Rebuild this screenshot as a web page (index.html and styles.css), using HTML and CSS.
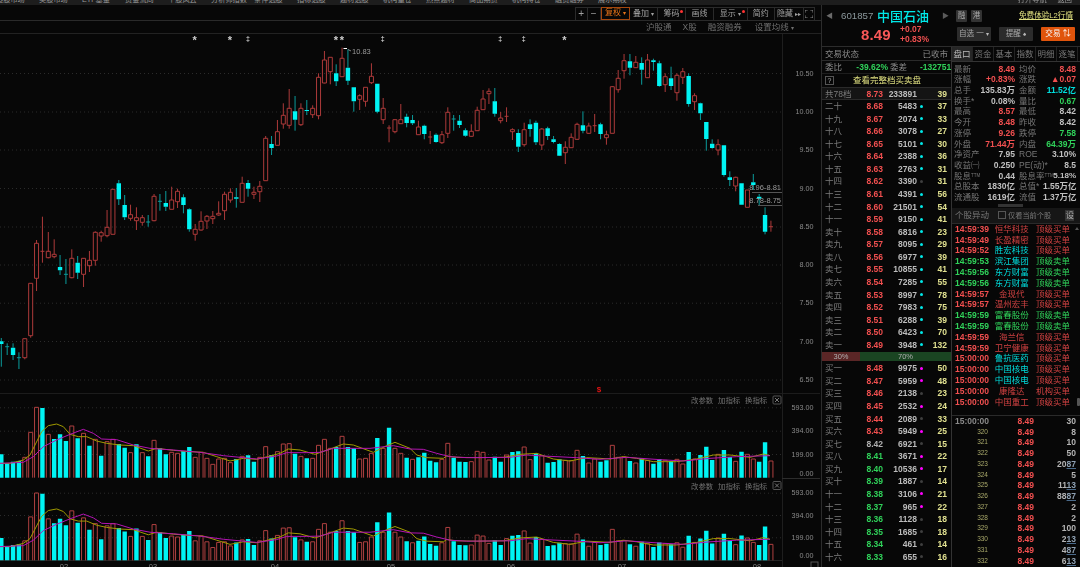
FILE: index.html
```html
<!DOCTYPE html>
<html lang="zh">
<head>
<meta charset="utf-8">
<title>中国石油 601857</title>
<link rel="stylesheet" href="styles.css">
</head>
<body>
<div class="app">
  <div class="chart-col">
    <nav class="topnav"><div class="topnav-in">
      <span>港股市场</span><span>美股市场</span><span>ETF基金</span><span>资金流向</span><span>个股风云</span><span>分析师指数</span><span>条件选股</span><span>指标选股</span><span>题材选股</span><span>机构重仓</span><span>热点题材</span><span>商品期货</span><span>机构持仓</span><span>融资融券</span><span>展示期权</span>
    </div></nav>
    <div class="toolbar">
      <button class="tb w1">+</button><button class="tb w2">−</button><button class="tb w3 on">复权 <em>▾</em></button><button class="tb w4">叠加 <em>▾</em></button><button class="tb w4">筹码<b class="rd"></b></button><button class="tb w4">画线</button><button class="tb w5">显示 <em>▾</em><b class="rd"></b></button><button class="tb w6">简约</button><button class="tb w7">隐藏 <em>▸▸</em></button><button class="tb w8">
        <svg class="full" viewBox="0 0 9 9"><path d="M0 3V0h3M6 0h3v3M9 6v3H6M3 9H0V6" /></svg></button>
    </div>
    <div class="subbar">
      <span class="s1">沪股通</span><span class="s2">X股</span><span class="s3">融资融券</span><span class="s4">设置均线 <em>▾</em></span>
    </div>
    <svg id="chart" class="chart" viewBox="0 34 820 533"></svg>
  </div>

  <aside class="side">
    <div class="strip"><span>打开导航</span><span>返回</span></div>
    <header class="head">
      <div class="head-a">
        <span class="arw">◀</span><span class="code">601857</span><span class="name">中国石油</span><span class="arw2">▶</span>
        <span class="sq">融</span><span class="sq">港</span><a class="free">免费体验L2行情</a>
      </div>
      <div class="head-b">
        <span class="bigp">8.49</span>
        <span class="chg"><span>+0.07</span><span>+0.83%</span></span>
        <button class="hb hb1">自选 一 <em>▾</em></button>
        <button class="hb hb2">提醒 <em>♠</em></button>
        <button class="hb hb3">交易 <em>⇅</em></button>
      </div>
    </header>
    <div class="panes">
      <section class="book">
        <div class="bk-status"><span>交易状态</span><span>已收市</span></div>
        <div class="bk-ratio"><span class="g1">委比</span><span class="gn">-39.62%</span><span class="g1">委差</span><span class="gn">-132751</span></div>
        <div class="bk-link"><i class="help">?</i><span>查看完整档买卖盘</span></div>
        <div class="bk bk-total"><span class="l gn">共78档</span><span class="p r">8.73</span><span class="v">233891</span><i class="dot"></i><span class="n">39</span></div>
        <div class="bk"><span class="l">二十</span><span class="p r">8.68</span><span class="v">5483</span><i class="dot c"></i><span class="n">37</span></div>
        <div class="bk"><span class="l">十九</span><span class="p r">8.67</span><span class="v">2074</span><i class="dot c"></i><span class="n">33</span></div>
        <div class="bk"><span class="l">十八</span><span class="p r">8.66</span><span class="v">3078</span><i class="dot c"></i><span class="n">27</span></div>
        <div class="bk"><span class="l">十七</span><span class="p r">8.65</span><span class="v">5101</span><i class="dot c"></i><span class="n">30</span></div>
        <div class="bk"><span class="l">十六</span><span class="p r">8.64</span><span class="v">2388</span><i class="dot c"></i><span class="n">36</span></div>
        <div class="bk"><span class="l">十五</span><span class="p r">8.63</span><span class="v">2763</span><i class="dot c"></i><span class="n">31</span></div>
        <div class="bk"><span class="l">十四</span><span class="p r">8.62</span><span class="v">3390</span><i class="dot y"></i><span class="n">31</span></div>
        <div class="bk"><span class="l">十三</span><span class="p r">8.61</span><span class="v">4391</span><i class="dot c"></i><span class="n">56</span></div>
        <div class="bk"><span class="l">十二</span><span class="p r">8.60</span><span class="v">21501</span><i class="dot c"></i><span class="n">54</span></div>
        <div class="bk"><span class="l">十一</span><span class="p r">8.59</span><span class="v">9150</span><i class="dot c"></i><span class="n">41</span></div>
        <div class="bk"><span class="l">卖十</span><span class="p r">8.58</span><span class="v">6816</span><i class="dot c"></i><span class="n">23</span></div>
        <div class="bk"><span class="l">卖九</span><span class="p r">8.57</span><span class="v">8095</span><i class="dot c"></i><span class="n">29</span></div>
        <div class="bk"><span class="l">卖八</span><span class="p r">8.56</span><span class="v">6977</span><i class="dot c"></i><span class="n">39</span></div>
        <div class="bk"><span class="l">卖七</span><span class="p r">8.55</span><span class="v">10855</span><i class="dot c"></i><span class="n">41</span></div>
        <div class="bk"><span class="l">卖六</span><span class="p r">8.54</span><span class="v">7285</span><i class="dot c"></i><span class="n">55</span></div>
        <div class="bk"><span class="l">卖五</span><span class="p r">8.53</span><span class="v">8997</span><i class="dot c"></i><span class="n">78</span></div>
        <div class="bk"><span class="l">卖四</span><span class="p r">8.52</span><span class="v">7983</span><i class="dot c"></i><span class="n">75</span></div>
        <div class="bk"><span class="l">卖三</span><span class="p r">8.51</span><span class="v">6288</span><i class="dot c"></i><span class="n">39</span></div>
        <div class="bk"><span class="l">卖二</span><span class="p r">8.50</span><span class="v">6423</span><i class="dot c"></i><span class="n">70</span></div>
        <div class="bk"><span class="l">卖一</span><span class="p r">8.49</span><span class="v">3948</span><i class="dot c"></i><span class="n">132</span></div>
        <div class="ratio-bar"><span class="rb-sell">30%</span><span class="rb-buy">70%</span></div>
        <div class="bk"><span class="l">买一</span><span class="p r">8.48</span><span class="v">9975</span><i class="dot m"></i><span class="n">50</span></div>
        <div class="bk"><span class="l">买二</span><span class="p r">8.47</span><span class="v">5959</span><i class="dot m"></i><span class="n">48</span></div>
        <div class="bk"><span class="l">买三</span><span class="p r">8.46</span><span class="v">2138</span><i class="dot y"></i><span class="n">23</span></div>
        <div class="bk"><span class="l">买四</span><span class="p r">8.45</span><span class="v">2532</span><i class="dot m"></i><span class="n">24</span></div>
        <div class="bk"><span class="l">买五</span><span class="p r">8.44</span><span class="v">2089</span><i class="dot y"></i><span class="n">33</span></div>
        <div class="bk"><span class="l">买六</span><span class="p r">8.43</span><span class="v">5949</span><i class="dot m"></i><span class="n">25</span></div>
        <div class="bk"><span class="l">买七</span><span class="p w">8.42</span><span class="v">6921</span><i class="dot y"></i><span class="n">15</span></div>
        <div class="bk"><span class="l">买八</span><span class="p gn">8.41</span><span class="v">3671</span><i class="dot m"></i><span class="n">22</span></div>
        <div class="bk"><span class="l">买九</span><span class="p gn">8.40</span><span class="v">10536</span><i class="dot m"></i><span class="n">17</span></div>
        <div class="bk"><span class="l">买十</span><span class="p gn">8.39</span><span class="v">1887</span><i class="dot y"></i><span class="n">14</span></div>
        <div class="bk"><span class="l">十一</span><span class="p gn">8.38</span><span class="v">3106</span><i class="dot m"></i><span class="n">21</span></div>
        <div class="bk"><span class="l">十二</span><span class="p gn">8.37</span><span class="v">965</span><i class="dot m"></i><span class="n">22</span></div>
        <div class="bk"><span class="l">十三</span><span class="p gn">8.36</span><span class="v">1128</span><i class="dot y"></i><span class="n">18</span></div>
        <div class="bk"><span class="l">十四</span><span class="p gn">8.35</span><span class="v">1685</span><i class="dot y"></i><span class="n">18</span></div>
        <div class="bk"><span class="l">十五</span><span class="p gn">8.34</span><span class="v">461</span><i class="dot y"></i><span class="n">14</span></div>
        <div class="bk"><span class="l">十六</span><span class="p gn">8.33</span><span class="v">655</span><i class="dot y"></i><span class="n">16</span></div>
      </section>

      <section class="info">
        <div class="tabs"><span class="on">盘口</span><span>资金</span><span>基本</span><span>指数</span><span>明细</span><span>逐笔</span></div>
        <div class="stats">
          <div class="st"><span>最新</span><b class="r">8.49</b><span>均价</span><b class="r">8.48</b></div>
          <div class="st"><span>涨幅</span><b class="r">+0.83%</b><span>涨跌</span><b class="r">▲0.07</b></div>
          <div class="st"><span>总手</span><b>135.83万</b><span>金额</span><b class="cy">11.52亿</b></div>
          <div class="st"><span>换手*</span><b>0.08%</b><span>量比</span><b class="gn">0.67</b></div>
          <div class="st"><span>最高</span><b class="r">8.57</b><span>最低</span><b>8.42</b></div>
          <div class="st"><span>今开</span><b class="r">8.48</b><span>昨收</span><b>8.42</b></div>
          <div class="st"><span>涨停</span><b class="r">9.26</b><span>跌停</span><b class="gn">7.58</b></div>
          <div class="st"><span>外盘</span><b class="r">71.44万</b><span>内盘</span><b class="gn">64.39万</b></div>
          <div class="st"><span>净资产</span><b>7.95</b><span>ROE</span><b>3.10%</b></div>
          <div class="st"><span>收益㈠</span><b>0.250</b><span>PE(动)*</span><b>8.5</b></div>
          <div class="st"><span>股息<sup>TTM</sup></span><b>0.44</b><span>股息率<sup>TTM</sup></span><b class="tight">5.18%</b></div>
          <div class="st"><span>总股本</span><b>1830亿</b><span>总值*</span><b>1.55万亿</b></div>
          <div class="st"><span>流通股</span><b>1619亿</b><span>流值</span><b>1.37万亿</b></div>
        </div>
        <div class="grip"><i></i></div>
        <div class="al-head"><span class="al-title">个股异动</span><i class="chk"></i><span class="al-only">仅看当前个股</span><span class="al-set">设</span></div>
        <div class="alerts">
          <div class="al"><span class="r">14:59:39</span><span class="dr">恒华科技</span><span class="dr">顶级买单</span></div>
          <div class="al"><span class="r">14:59:49</span><span class="dr">长盈精密</span><span class="dr">顶级买单</span></div>
          <div class="al"><span class="r">14:59:52</span><span class="cy">胜宏科技</span><span class="dr">顶级买单</span></div>
          <div class="al"><span class="gn">14:59:53</span><span class="cy">滨江集团</span><span class="gn">顶级卖单</span></div>
          <div class="al"><span class="gn">14:59:56</span><span class="cy">东方财富</span><span class="gn">顶级卖单</span></div>
          <div class="al"><span class="gn">14:59:56</span><span class="cy">东方财富</span><span class="gn">顶级卖单</span></div>
          <div class="al"><span class="r">14:59:57</span><span class="dr">金现代</span><span class="dr">顶级买单</span></div>
          <div class="al"><span class="r">14:59:57</span><span class="dr">温州宏丰</span><span class="dr">顶级买单</span></div>
          <div class="al"><span class="gn">14:59:59</span><span class="gn">富春股份</span><span class="gn">顶级卖单</span></div>
          <div class="al"><span class="gn">14:59:59</span><span class="gn">富春股份</span><span class="gn">顶级卖单</span></div>
          <div class="al"><span class="r">14:59:59</span><span class="dr">海兰信</span><span class="dr">顶级买单</span></div>
          <div class="al"><span class="r">14:59:59</span><span class="dr">卫宁健康</span><span class="dr">顶级买单</span></div>
          <div class="al"><span class="r">15:00:00</span><span class="cy">鲁抗医药</span><span class="dr">顶级买单</span></div>
          <div class="al"><span class="r">15:00:00</span><span class="cy">中国核电</span><span class="dr">顶级买单</span></div>
          <div class="al"><span class="r">15:00:00</span><span class="cy">中国核电</span><span class="dr">顶级买单</span></div>
          <div class="al"><span class="r">15:00:00</span><span class="dr">康隆达</span><span class="dr">机构买单</span></div>
          <div class="al"><span class="r">15:00:00</span><span class="dr">中国重工</span><span class="dr">顶级买单</span></div>
          <i class="sc-up"></i><i class="sc-thumb"></i>
        </div>
        <div class="trades">
          <div class="tr"><span class="t">15:00:00</span><span class="r">8.49</span><span>30</span></div>
          <div class="tr"><span class="i">320</span><span class="r">8.49</span><span>8</span></div>
          <div class="tr"><span class="i">321</span><span class="r">8.49</span><span>10</span></div>
          <div class="tr"><span class="i">322</span><span class="r">8.49</span><span>50</span></div>
          <div class="tr"><span class="i">323</span><span class="r">8.49</span><span>20<u>87</u></span></div>
          <div class="tr"><span class="i">324</span><span class="r">8.49</span><span>5</span></div>
          <div class="tr"><span class="i">325</span><span class="r">8.49</span><span>11<u>13</u></span></div>
          <div class="tr"><span class="i">326</span><span class="r">8.49</span><span>88<u>87</u></span></div>
          <div class="tr"><span class="i">327</span><span class="r">8.49</span><span>2</span></div>
          <div class="tr"><span class="i">328</span><span class="r">8.49</span><span>2</span></div>
          <div class="tr"><span class="i">329</span><span class="r">8.49</span><span>100</span></div>
          <div class="tr"><span class="i">330</span><span class="r">8.49</span><span>2<u>13</u></span></div>
          <div class="tr"><span class="i">331</span><span class="r">8.49</span><span>4<u>87</u></span></div>
          <div class="tr"><span class="i">332</span><span class="r">8.49</span><span>6<u>13</u></span></div>
        </div>
      </section>
    </div>
  </aside>
</div>
<script src="chart.js"></script>
</body>
</html>
```
FILE: styles.css
```css
* { box-sizing: border-box; margin: 0; padding: 0; }
html, body { width: 1080px; height: 567px; overflow: hidden; background: #070707; }
body { font: 8.5px/1 "Liberation Sans", "Noto Sans CJK SC", sans-serif; color: #a8a8a8; }
em, i, b { font-style: normal; font-weight: normal; }
button { font: inherit; background: none; border: 0; color: inherit; }

.app { display: flex; width: 1080px; height: 567px; overflow: hidden; filter: blur(.25px); }
.chart-col { width: 821px; flex: none; display: flex; flex-direction: column; }

.topnav { height: 5px; background: #1d1d1d; overflow: hidden; }
.topnav-in { display: flex; margin: -4px 0 0 -4px; line-height: 8px; font-size: 7.2px; color: #9a9a9a; white-space: nowrap; }
.topnav-in span { flex: 0 0 43px; }

.toolbar { display: flex; justify-content: flex-end; height: 14.5px; margin-top: 1.5px; padding-right: 6px; border-bottom: 1px solid #2a2a2a; }
.tb { height: 13.5px; border: 1px solid #2a2a2a; border-width: 1px 1px 0 0; color: #a0a0a0; font-size: 8px; display: flex; align-items: center; justify-content: center; position: relative; white-space: nowrap; }
.tb em { font-size: 6px; margin-left: 2px; }
.tb.w1 { width: 12.5px; border-left: 1px solid #2a2a2a; font-size: 10px; }
.tb.w2 { width: 13.5px; font-size: 10px; }
.tb.w3 { width: 29px; border: 1px solid #a5480f; color: #e87418; }
.tb.w4 { width: 28px; }
.tb.w5 { width: 33.5px; }
.tb.w6 { width: 27.5px; }
.tb.w7 { width: 29px; }
.tb.w8 { width: 11px; }
.rd { position: absolute; top: 2px; right: 2px; width: 3px; height: 3px; border-radius: 50%; background: #f33; }
.full { width: 8px; height: 8px; fill: none; stroke: #9a9a9a; stroke-width: 1; }

.subbar { display: flex; height: 13px; line-height: 13px; color: #6e6e6e; border-bottom: 1px solid #222; white-space: nowrap; }
.subbar em { font-size: 6px; }
.s1 { margin-left: 646px; }
.s2 { margin-left: 11px; }
.s3 { margin-left: 11px; }
.s4 { margin-left: 13px; }

.chart { display: block; width: 820px; height: 533px; }
.ax { font: 7.2px "Liberation Sans", sans-serif; fill: #8a8a8a; text-anchor: end; }
.tag { font: 7.5px "Liberation Sans", sans-serif; fill: #9a9a9a; }
.tag-end { text-anchor: end; }
.opt { font: 7.4px "Noto Sans CJK SC", sans-serif; fill: #747474; }
.mark { font: bold 11px "Liberation Sans", sans-serif; fill: #d0d0d0; text-anchor: middle; }
.mark-thin { font: bold 7px "Liberation Sans", sans-serif; fill: #d0d0d0; text-anchor: middle; }
.dollar { font: bold 8px "Liberation Sans", sans-serif; fill: #e01414; text-anchor: middle; }
.date { font: 7.5px "Liberation Sans", sans-serif; fill: #808080; text-anchor: middle; }

.side { flex: 1; display: flex; flex-direction: column; min-width: 0; }
.strip { height: 5px; background: #1d1d1d; overflow: hidden; display: flex; justify-content: flex-end; gap: 11px; padding-right: 8px; line-height: 6px; font-size: 7.2px; color: #9a9a9a; }
.strip span { margin-top: -3px; }
.head { height: 41.5px; border-left: 1px solid #2c2c2c; border-bottom: 1px solid #2c2c2c; }
.head-a { display: flex; align-items: center; height: 18px; padding-top: 3px; }
.arw { margin-left: 4px; width: 15px; color: #6a6a6a; font-size: 7px; }
.code { font-size: 9.7px; color: #8c989c; width: 36px; }
.name { font-size: 13px; width: 52px; color: #00e8e8; font-weight: 500; font-family: "Noto Sans CJK SC", sans-serif; }
.arw2 { margin-left: 13px; width: 14px; color: #5a5a5a; font-size: 7px; }
.sq { width: 11px; height: 12px; margin-right: 4px; background: #333; color: #a8a8a8; font-size: 7.5px; line-height: 12px; text-align: center; border-radius: 1px; }
.free { margin-left: 33px; font-size: 7.6px; color: #e0e080; text-decoration: underline; white-space: nowrap; }
.head-b { display: flex; align-items: center; height: 21px; padding-top: 1px; }
.bigp { margin-left: 39px; width: 39px; font-size: 15px; font-weight: bold; color: #f85858; letter-spacing: .1px; }
.chg { display: flex; flex-direction: column; gap: 1.5px; width: 57px; color: #f05050; font-weight: bold; }
.hb { width: 34px; height: 14px; background: #2c2c2c; color: #a8a8a8; white-space: nowrap; font-size: 7.6px; border-radius: 1px; }
.hb em { font-size: 6px; color: #bbb; }
.hb1 { margin-right: 8px; }
.hb2 { margin-right: 8px; }
.hb3 { background: #e0540c; color: #f4f4f4; }
.hb3 em { color: #fff; font-size: 8px; }

.panes { flex: 1; display: flex; min-height: 0; border-left: 1px solid #2c2c2c; }
.book { width: 130px; flex: none; border-right: 1px solid #333; overflow: hidden; }
.bk-status { display: flex; justify-content: space-between; height: 14px; line-height: 14px; padding: 0 3px; border-bottom: 1px solid #2a2a2a; color: #8a8a8a; }
.bk-ratio { display: grid; grid-template-columns: 30px 33px 32px 27px; height: 13px; line-height: 13px; padding-left: 3px; border-bottom: 1px solid #1d1d1d; color: #8a8a8a; white-space: nowrap; }
.bk-ratio .gn { text-align: right; font-weight: bold; }
.bk-ratio .g1:nth-child(3) { padding-left: 2px; }
.bk-link { display: flex; align-items: center; height: 13px; padding-left: 3px; color: #e0e080; }
.bk-link span { margin-left: 19px; }
.help { width: 9px; height: 9px; border: 1px solid #555; color: #a8a8a8; font-size: 7px; line-height: 7px; text-align: center; }
.bk { display: grid; grid-template-columns: 37px 21px 34px 8px 22px; height: 12.57px; line-height: 12.57px; padding-left: 3px; white-space: nowrap; }
.bk-total { height: 13.6px; line-height: 13px; background: #141414; border-bottom: 1px solid #2a2a2a; border-top: 1px solid #2a2a2a; }
.bk .l { color: #7c7c7c; font-size: 8.5px; }
.bk .p { text-align: right; font-weight: bold; }
.bk .v { text-align: right; color: #bcbcbc; font-weight: bold; }
.bk .n { text-align: right; color: #e0e090; font-weight: bold; }
.dot { display: block; width: 3px; height: 3px; border-radius: 50%; margin: 4.5px 0 0 2.5px; }
.dot.c { background: #00e8e8; }
.dot.m { background: #f0f; }
.dot.y { background: #3e3e3e; }
.ratio-bar { display: flex; height: 9.5px; margin: .5px 0 1px; line-height: 9.5px; font-size: 7.5px; color: #b0b0b0; text-align: center; }
.rb-sell { width: 38px; background: #5a2626; }
.rb-buy { flex: 1; background: #1a4522; }

.r { color: #f25050; }
.dr { color: #d24242; }
.gn { color: #30d25a; }
.cy { color: #00dcdc; }
.w { color: #b0b0b0; }
.g1 { color: #8a8a8a; }

.info { flex: 1; min-width: 0; display: flex; flex-direction: column; overflow: hidden; }
.tabs { display: grid; grid-template-columns: repeat(6, 21px); height: 15px; line-height: 14px; text-align: center; color: #787878; border-bottom: 1px solid #333; }
.tabs span { border-right: 1px solid #222; }
.tabs .on { background: #262626; color: #bcbcbc; }
.stats { padding: 2px 0 0 2px; }
.st { display: grid; grid-template-columns: 24px 37px 4px 24px 33px; height: 10.72px; line-height: 10.72px; white-space: nowrap; color: #767676; }
.st span:nth-child(3) { grid-column: 4; }
.st b { text-align: right; color: #c0c0c0; font-weight: bold; }
.st b.r { color: #f25050; }
.st b.gn { color: #30d25a; }
.st b.cy { color: #00dcdc; }
.st sup { font-size: 4.5px; vertical-align: 2px; line-height: 0; }
.st b.tight { font-size: 8px; }
.grip { height: 5px; }
.grip i { display: block; width: 25px; height: 3px; margin: 1px 0 0 46px; background: #333; }
.al-head { display: flex; align-items: center; height: 16px; background: #161616; border-bottom: 1px solid #2a2a2a; color: #787878; }
.al-title { margin-left: 3px; font-size: 8.5px; }
.chk { width: 8px; height: 8px; margin-left: 9px; border: 1px solid #555; }
.al-only { margin-left: 2px; font-size: 7.2px; }
.al-set { margin-left: 14px; width: 9px; height: 11px; line-height: 11px; background: #333; color: #a8a8a8; text-align: center; }
.alerts { position: relative; height: 191px; }
.al { display: grid; grid-template-columns: 38.7px 36px 1fr; height: 10.8px; line-height: 10.8px; padding-left: 3px; white-space: nowrap; }
.al span:first-child { font-weight: bold; }
.al span:nth-child(2) { text-align: center; }
.al span:nth-child(3) { padding-left: 6.3px; }
.sc-up { position: absolute; right: 1px; top: 1px; border: 2px solid transparent; border-bottom: 3px solid #555; }
.sc-thumb { position: absolute; right: 0; top: 174px; width: 3px; height: 8px; background: #555; border-radius: 1px; }
.trades { border-top: 1px solid #2a2a2a; }
.tr { display: grid; grid-template-columns: 33px 46px 42px; height: 10.75px; line-height: 10.75px; padding-left: 3px; color: #b4b4b4; font-weight: bold; white-space: nowrap; }
.tr span { text-align: right; }
.tr .t { color: #8a8a8a; }
.tr .i { color: #a8a86a; font-size: 6.5px; font-weight: normal; }
.tr .r { color: #f25050; }
.tr u { color: #8ea0b2; text-decoration-color: #4a6a8a; }
```
FILE: chart.js
```js
// Daily candles: [type, wickTop, bodyTop, bodyBottom, wickBottom] (pixels in the chart's coordinates)
var C = [
['d',338,341.3,344,366.7],['t',343.3,346.7,347.7,355],['d',343.3,347.7,355,360],['t',352.3,357.7,358.3,369],
['u',338.3,338.7,357.7,359.3],['u',283.3,283.3,335.7,337.7],['u',240,243.3,278.3,291],['x',216.7,251.3,252.3,262.7],
['u',232,251.3,257.7,258.3],['u',239.3,254.3,256.7,258.3],['d',255,267,270.3,275],['t',259,274.3,275,284],
['u',249.3,258.3,277.7,278.3],['d',256,262.7,272.7,279],['u',258,258.3,274.3,287],['u',251,260.3,265.7,272],
['u',231.3,232.3,260.3,265.7],['u',230.7,232.7,236,241.7],['u',210,227.3,235.7,237.3],['u',189,189.3,234.3,234.3],
['d',180,183.3,199.3,205],['d',195,205,217.3,220],['u',204.7,214.7,218.3,220.7],['u',207.3,217.7,220.7,230],
['u',215,217.7,222.3,225.7],['t',215,222,222.7,226.7],['u',194,196.3,220.7,221.3],['t',194,201.3,202,210.7],
['d',191,203,206.7,211],['u',186.7,200,209.3,209.3],['u',188.7,191.3,201.7,208],['d',194.3,197.3,205,213.3],
['d',208.3,209.3,229.3,231.7],['u',224,229.3,234.3,240.7],['u',211.3,221.3,230,230.7],['u',215,216.3,221,229],
['u',211,216.3,218.7,224],['u',201.3,213.3,215,215.7],['u',191.7,194.3,210.7,220],['u',188.3,192.3,200,202.7],
['d',188,197.3,198.7,207.7],['u',176.7,183.3,202.3,202.3],['d',180,183,188.7,196.7],['u',186.7,192.3,194.3,199],
['u',181,186.3,191.7,202],['u',136,138.3,180.7,180.7],['d',136,144,148,155],['u',120,131.7,145.3,145.3],
['u',103.3,115.3,124,128.7],['u',89,108.3,125.3,128.7],['d',96,111.3,119.7,130.7],['u',103.3,108.3,124.7,126],
['d',100,110,111,115],['u',105.3,108.3,114.7,118],['u',73.3,77.3,115.7,119.3],['u',51,60,83,83.3],
['u',57.3,57.3,71.7,84.3],['d',64.3,73.3,81.3,86],['u',47.7,58.3,76.7,77],['d',49.3,67.7,80.7,85],
['d',87.3,87.3,101.3,111.7],['u',94.3,95.7,99.3,110],['u',87.3,87.3,101.3,106.7],['u',63.3,76.3,82.7,84],
['d',83.7,83.7,111.7,113.3],['u',98,108.3,119.7,124],['x',125.3,128,128.7,142.3],['u',119.3,119.7,131.7,133.3],
['u',104,119.7,123.7,123.3],['d',113.7,116.7,123,127.3],['d',115,120,123.3,125],['u',120.7,127,134.7,135],
['d',124.7,125.7,134,139.3],['x',131,137,138.3,144],['d',133.3,134.7,142,142.7],['u',131,134.7,142.7,144],
['u',107.3,112.3,133.3,138],['t',115,119,119.7,130.7],['d',115,120.7,125,128],['d',128.3,130.3,135.7,136.7],
['u',124.3,131.3,136.3,136.7],['u',106.7,110.3,130.7,130.7],['u',90,99,109.7,110],['u',88.3,91.3,93.7,104],
['d',88,101.3,113.7,116.7],['u',112,118,120.7,123.3],['x',107.3,116.3,117.3,122],['u',128.3,129.7,131.7,140],
['d',129.3,133,146.7,152],['u',122.7,129.7,144.7,146.7],['d',119.3,124.3,129,136.7],['d',120.7,122.7,142.3,145],
['u',128,129,145,150],['d',126.7,128.3,136,140],['d',136,139.3,142,143.3],['d',143.3,144,155.7,156],
['u',141.3,147.3,152.7,164],['u',133.3,137.3,147.7,147.7],['u',122.7,124.3,139.3,140],['d',111.3,125.3,130.7,133.3],
['u',122.7,126,133.3,134],['x',114,125.7,126.7,132],['d',122.7,124.3,134,139.3],['u',130.7,134.7,137.7,144.7],
['u',86,86.7,133.3,133.3],['u',70,78.3,89.7,92.7],['u',54,60.7,70.7,78.7],['d',54,61.3,67.7,75.3],
['u',56,62.3,67.7,68],['d',57.3,63,69.7,84.7],['u',54,60,77.7,78],['d',58.7,60.3,62,70.7],
['d',60.7,63.3,86,86.7],['u',73.3,76.7,84.7,92],['d',66.7,78.3,86,90],['u',73.3,75.3,92.7,100.7],
['u',68,71.7,77.3,84],['d',73.3,76,104,106.7],['u',93.3,95.7,101.7,110],['d',102.7,103.3,113.3,120],
['d',122,122,139,150.7],['d',139.3,143.7,148,148.7],['u',139.3,144.7,150,155.3],['d',145.3,145.3,175,176.7],
['d',171.3,177.3,180,186],['u',176.7,177.3,186,191.3],['d',183.3,183.3,204.7,204.7],['u',190,190,207.3,207.3],
['d',174,182.3,185,190],['d',194,196.7,198.7,205.7],['d',207.3,215,231.7,234.3],['x',220.7,226.7,227.7,231.7]
];

// Volume bars: top of each bar, measured in 3x crop units (0..248), split into its colour.
var V = ('d178 d205 d200 d198 u187 u112 u37 d39 u118 d132 d118 d138 u93 d130 u115 d152 u133 d182 u140 u133 d147 d158 u173 d148 u173 d184 u136 d160 d178 u172 u175 d168 d156 u187 u172 u190 u208 u192 u190 u203 d192 u184 d181 d200 u187 u155 d180 u170 u147 u146 d176 u184 d190 u190 u151 u133 u160 d156 u124 d156 d160 u192 u190 u175 d129 u160 d98 u160 u175 d188 ' +
  'u193 d187 d173 d197 d202 u193 u145 d188 d200 d201 u200 u169 u172 u195 d185 d200 u180 d171 d169 u156 u194 d175 u182 d203 d201 d193 u196 u197 u166 d183 u204 u192 d200 d196 u151 u187 u186 d198 u204 d190 u196 d206 d192 u196 d198 u193 u207 d171 u192 d180 d155 d195 u178 d165 d186 u199 d170 u178 u192 d200 d142 u198').split(' ');

// Volume moving averages as x,y in crop units; the second half of each line starts at x = 410.
var MAY = [[0,205],[30,205],[70,195],[90,180],[105,150],[125,110],[145,92],[170,87],[190,95],[210,118],[235,125],[260,125],[290,138],[320,145],[360,150],[400,152],[445,168],[470,160],[520,166],[570,170],[610,172],[650,185],[690,198],[730,190],[770,193],[810,183],[840,175],[865,162],[900,165],[945,178],[990,162],[1030,147],[1060,150],[1120,172],[1160,152],[1185,142],[1230,160],
 [1250,180],[1280,188],[1330,190],[1340,183],[1370,187],[1430,188],[1510,187],[1560,178],[1610,175],[1660,192],[1710,198],[1760,188],[1800,190],[1830,192],[1870,185],[1910,190],[1960,200],[2030,200],[2090,192],[2140,180],[2190,180],[2250,187],[2290,177],[2310,182]];
var MAM = [[0,205],[70,202],[100,185],[130,155],[170,135],[210,118],[250,103],[280,115],[305,132],[350,134],[400,150],[450,160],[520,165],[600,172],[670,182],[720,187],[770,192],[830,183],[860,173],[920,173],[960,172],[1000,160],[1060,160],[1110,160],[1180,152],[1230,162],
 [1270,163],[1310,175],[1350,185],[1400,188],[1530,187],[1580,180],[1630,183],[1730,188],[1800,193],[1880,187],[1980,194],[2050,198],[2130,190],[2210,185],[2310,182]];

var S = 5.875, svg = document.getElementById('chart'), NS = 'http://www.w3.org/2000/svg';
function add(tag, attrs, text) {
  var e = document.createElementNS(NS, tag);
  for (var k in attrs) e.setAttribute(k, attrs[k]);
  if (text !== undefined) e.textContent = text;
  svg.appendChild(e);
}
function X(i) { return 1.3 + S * i; }
function path(d, stroke, fill) { add('path', { d: d, stroke: stroke || 'none', fill: fill || 'none', 'stroke-width': 1 }); }
function hline(y, x2, color, dash) {
  var a = { x1: 0, x2: x2, y1: y, y2: y, stroke: color, 'stroke-width': 1 };
  if (dash) a['stroke-dasharray'] = dash;
  add('line', a);
}

// grid and axes
[73, 111.5, 149.5, 188, 226.5, 264.5, 302.7, 341, 379.5].forEach(function (y) { hline(y + .5, 782, '#2b2b2b', '1 3'); });
[407.3, 430.7, 454, 492.7, 515, 537.3].forEach(function (y) { hline(y + .5, 782, '#2b2b2b', '1 3'); });
hline(393.5, 820, '#1c1c1c');
hline(560.5, 782, '#242424');
add('line', { x1: 782.5, x2: 782.5, y1: 34, y2: 567, stroke: '#1e1e1e' });
add('line', { x1: 782, x2: 820, y1: 478.5, y2: 478.5, stroke: '#2c2c2c' });
[['10.50', 73], ['10.00', 111.5], ['9.50', 149.5], ['9.00', 188], ['8.50', 226.5], ['8.00', 264.5], ['7.50', 302.7], ['7.00', 341], ['6.50', 379.5],
 ['593.00', 407.3], ['394.00', 430.7], ['199.00', 454], ['0.00', 473.3], ['593.00', 492.7], ['394.00', 515], ['199.00', 537.3], ['0.00', 555.3]
].forEach(function (t) { add('text', { x: 813.5, y: t[1] + 2.6, 'class': 'ax' }, t[0]); });

// candles
var redLine = '', tealLine = '', cyanFill = '';
C.forEach(function (c, i) {
  var x = X(i), t = c[0], wick = 'M' + x + ' ' + c[1] + 'V' + c[2] + 'M' + x + ' ' + c[3] + 'V' + c[4];
  var box = 'M' + (x - 2) + ' ' + c[2] + 'H' + (x + 2) + 'V' + c[3] + 'H' + (x - 2) + 'Z';
  if (t === 'u') redLine += wick + box;
  else if (t === 'x') redLine += 'M' + x + ' ' + c[1] + 'V' + c[4] + 'M' + (x - 2) + ' ' + c[2] + 'H' + (x + 2);
  else if (t === 't') tealLine += 'M' + x + ' ' + c[1] + 'V' + c[4] + 'M' + (x - 2) + ' ' + c[2] + 'H' + (x + 2);
  else { tealLine += wick; cyanFill += 'M' + (x - 2.2) + ' ' + c[2] + 'H' + (x + 2.2) + 'V' + c[3] + 'H' + (x - 2.2) + 'Z'; }
});
path(redLine, '#ad3a3a');
path(tealLine, '#0a9c9c');
path(cyanFill, 'none', '#00f4f4');

// volume panels
function py(p, z) { return p === 0 ? 395 + z / 3 : 560.3 - (248 - z) / 3 * 0.957; }
[0, 1].forEach(function (p) {
  var red = '', cy = '', base = py(p, 248);
  V.forEach(function (v, i) {
    var x = X(i), top = py(p, +v.slice(1));
    if (v[0] === 'u') red += 'M' + (x - 2) + ' ' + base + 'V' + top + 'H' + (x + 2) + 'V' + base;
    else cy += 'M' + (x - 2.2) + ' ' + base + 'V' + top + 'H' + (x + 2.2) + 'V' + base + 'Z';
  });
  path(red, '#b04040');
  path(cy, 'none', '#00f4f4');
  function line(pts, color) {
    add('polyline', { points: pts.map(function (q) { return (q[0] / 3) + ',' + py(p, q[1]); }).join(' '), fill: 'none', stroke: color, 'stroke-width': 1 });
  }
  line(MAY, '#a09a00');
  line(MAM, '#b414b4');
  var oy = p === 0 ? 403 : 488.5;
  add('text', { x: 691, y: oy, 'class': 'opt' }, '改参数');
  add('text', { x: 718, y: oy, 'class': 'opt' }, '加指标');
  add('text', { x: 745, y: oy, 'class': 'opt' }, '换指标');
  add('rect', { x: 773, y: oy - 7, width: 8, height: 8, fill: 'none', stroke: '#555', rx: 1 });
  add('path', { d: 'M775 ' + (oy - 5) + 'l4 4m0 -4l-4 4', stroke: '#777', fill: 'none' });
});

// event markers and labels
[194.7, 230, 248, 336, 342, 382.7, 500.3, 523.7, 564.3].forEach(function (x, i) {
  var thin = i === 2 || i === 5 || i === 6 || i === 7;
  add('text', { x: x, y: thin ? 41 : 44, 'class': thin ? 'mark-thin' : 'mark' }, thin ? '‡' : '*');
});
add('text', { x: 599, y: 392, 'class': 'dollar' }, '$');
add('path', { d: 'M343.5 48.5H347', stroke: '#fff', fill: 'none' });
add('path', { d: 'M348 49.5L351 51', stroke: '#888', fill: 'none' });
add('text', { x: 352, y: 54, 'class': 'tag' }, '10.83');
add('text', { x: 781, y: 190, 'class': 'tag tag-end' }, '8.96-8.81');
add('path', { d: 'M752 192.5H782', stroke: '#555', fill: 'none' });
add('text', { x: 781, y: 203, 'class': 'tag tag-end' }, '8.78-8.75');
add('path', { d: 'M758 205.5H782', stroke: '#555', fill: 'none' });
[['02', 64], ['03', 153], ['04', 275], ['05', 391], ['06', 511], ['07', 622], ['08', 757]].forEach(function (d) {
  add('text', { x: d[1], y: 568.5, 'class': 'date' }, d[0]);
});
add('rect', { x: 811, y: 562, width: 7, height: 7, fill: 'none', stroke: '#555' });
```
